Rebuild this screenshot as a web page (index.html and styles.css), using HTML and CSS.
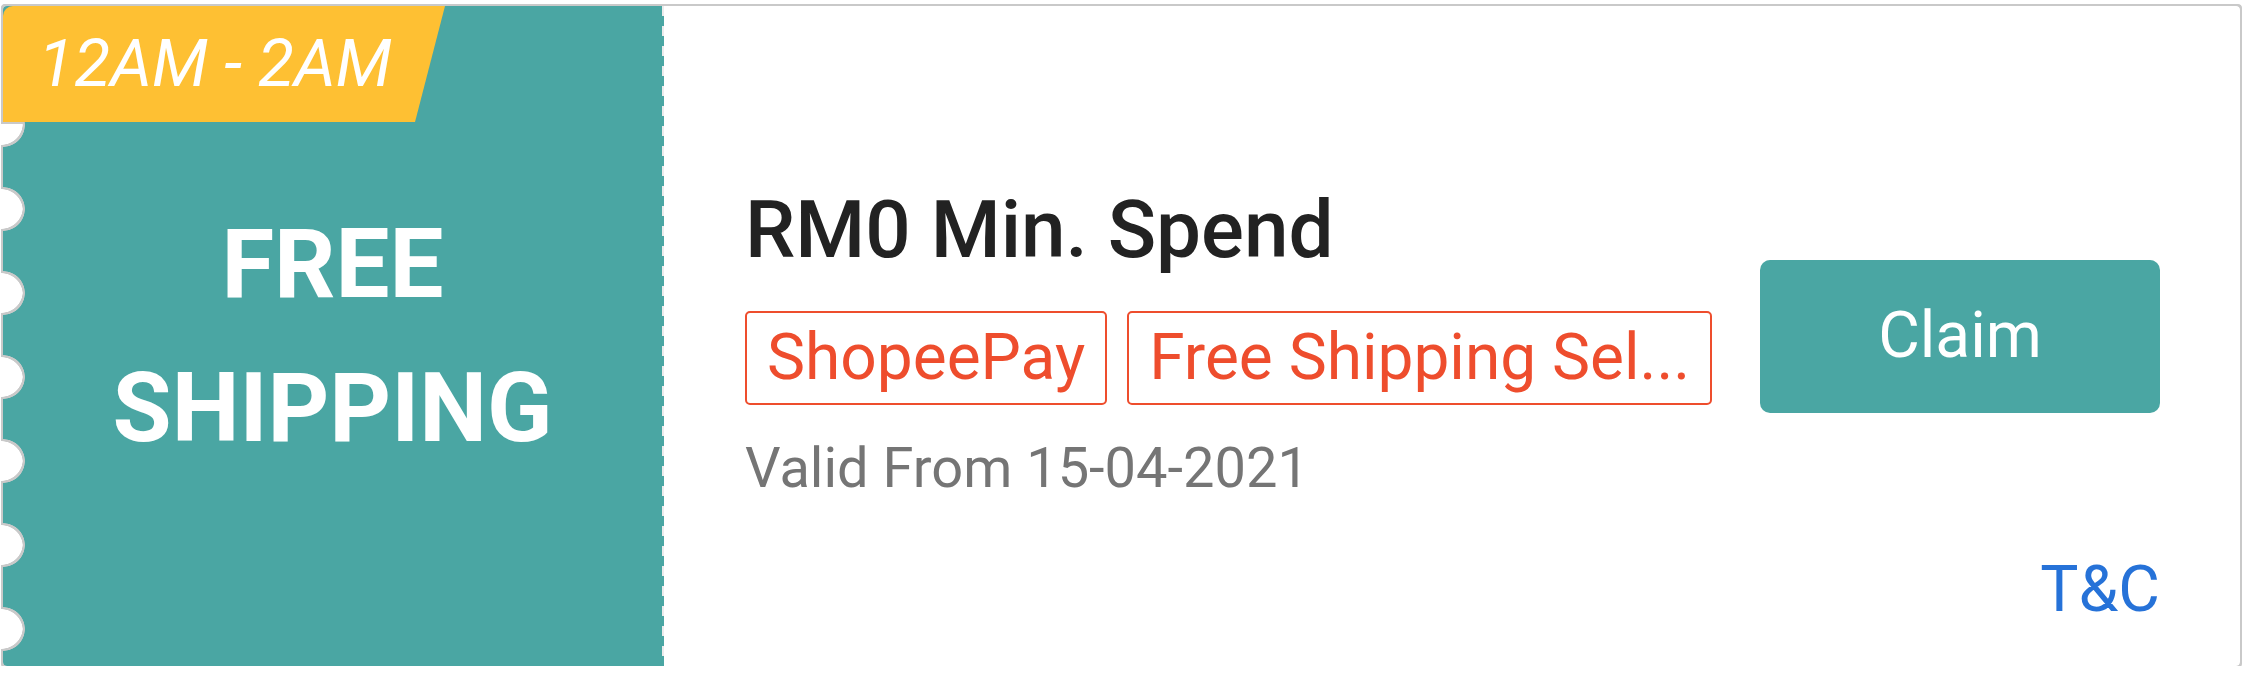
FILE: index.html
```html
<!DOCTYPE html>
<html lang="en">
<head>
<meta charset="utf-8">
<title>Voucher</title>
<link rel="stylesheet" href="styles.css">
</head>
<body>
<div class="wrap">
  <div class="card">
    <div class="left">
      <div class="badge">12AM - 2AM</div>
      <div class="left-title">FREE<br>SHIPPING</div>
    </div>
    <div class="right">
      <div class="info">
        <div class="title">RM0 Min. Spend</div>
        <div class="tags">
          <span class="tag">ShopeePay</span>
          <span class="tag tag-grow">Free Shipping Sel...</span>
        </div>
        <div class="valid">Valid From 15-04-2021</div>
      </div>
      <button class="claim" type="button">Claim</button>
      <a class="tc">T&amp;C</a>
    </div>
  </div>
</div>
</body>
</html>
```

FILE: styles.css
```css
html, body {
  margin: 0;
  padding: 0;
  background: #ffffff;
}

body {
  font-family: Roboto, "Liberation Sans", Arial, sans-serif;
}

.wrap {
  padding: 6px 0 0 3px;
  width: 2237px;
  filter: drop-shadow(2px 0 0 #c9c9c9) drop-shadow(-2px 0 0 #c9c9c9) drop-shadow(0 2px 0 #c9c9c9) drop-shadow(0 -2px 0 #c9c9c9);
}

.card {
  display: flex;
  width: 2237px;
  height: 660px;
  background: #ffffff;
  border-radius: 4px;
  -webkit-mask-image: linear-gradient(#000, #000), radial-gradient(circle at 0 42px, transparent 21.5px, #000 22.2px);
  -webkit-mask-size: 100% 116px, 100% 84px;
  -webkit-mask-position: 0 0, 0 77px;
  -webkit-mask-repeat: no-repeat, repeat-y;
  mask-image: linear-gradient(#000, #000), radial-gradient(circle at 0 42px, transparent 21.5px, #000 22.2px);
  mask-size: 100% 116px, 100% 84px;
  mask-position: 0 0, 0 77px;
  mask-repeat: no-repeat, repeat-y;
}

.left {
  position: relative;
  flex: none;
  width: 661px;
  display: flex;
  align-items: center;
  justify-content: center;
  padding-right: 2px;
  box-sizing: border-box;
  background:
    repeating-linear-gradient(to bottom, #ececec 0 10px, transparent 10px 20px) right 0 top 0 / 2px 100% no-repeat,
    #4aa6a3;
  border-radius: 4px 0 0 4px;
}

.badge {
  position: absolute;
  left: 0;
  top: 0;
  width: 442px;
  height: 116px;
  box-sizing: border-box;
  padding-right: 18px;
  background: #fec033;
  border-top-left-radius: 10px;
  clip-path: polygon(0 0, 442px 0, 412px 116px, 0 116px);
  color: #ffffff;
  font-style: italic;
  font-size: 66px;
  line-height: 116px;
  text-align: center;
  white-space: nowrap;
}

.left-title {
  color: #ffffff;
  font-weight: 700;
  font-size: 96px;
  line-height: 144px;
  text-align: center;
}

.right {
  flex: 1;
  min-width: 0;
  display: grid;
  grid-template-columns: minmax(0, 1fr) 400px;
  grid-template-rows: 1fr 153px 1fr;
  column-gap: 47px;
  padding: 0 80px 0 81px;
}

.info {
  grid-column: 1;
  grid-row: 1 / 4;
  align-self: center;
  margin-top: 12px;
  min-width: 0;
}

.title {
  font-size: 80px;
  font-weight: 500;
  line-height: 96px;
  color: #222222;
  white-space: nowrap;
}

.tags {
  display: flex;
  gap: 20px;
  margin-top: 33px;
  min-width: 0;
}

.tag {
  flex: none;
  border: 2px solid #ee4d2d;
  border-radius: 5px;
  color: #ee4d2d;
  font-size: 64px;
  line-height: 77px;
  padding: 6.5px 20px;
  white-space: nowrap;
}

.tag-grow {
  flex: 0 1 auto;
  min-width: 0;
  overflow: hidden;
}

.valid {
  margin-top: 28px;
  font-size: 56px;
  line-height: 70px;
  color: #757575;
  white-space: nowrap;
}

.claim {
  grid-column: 2;
  grid-row: 2;
  border: 0;
  border-radius: 10px;
  background: #4aa6a3;
  color: #ffffff;
  font-family: Roboto, "Liberation Sans", Arial, sans-serif;
  font-size: 64px;
  line-height: 1;
  padding: 0;
  cursor: pointer;
}

.tc {
  grid-column: 2;
  grid-row: 3;
  align-self: end;
  justify-self: end;
  margin-bottom: 38px;
  font-size: 64px;
  line-height: 77px;
  color: #2672d8;
  cursor: pointer;
}
```
